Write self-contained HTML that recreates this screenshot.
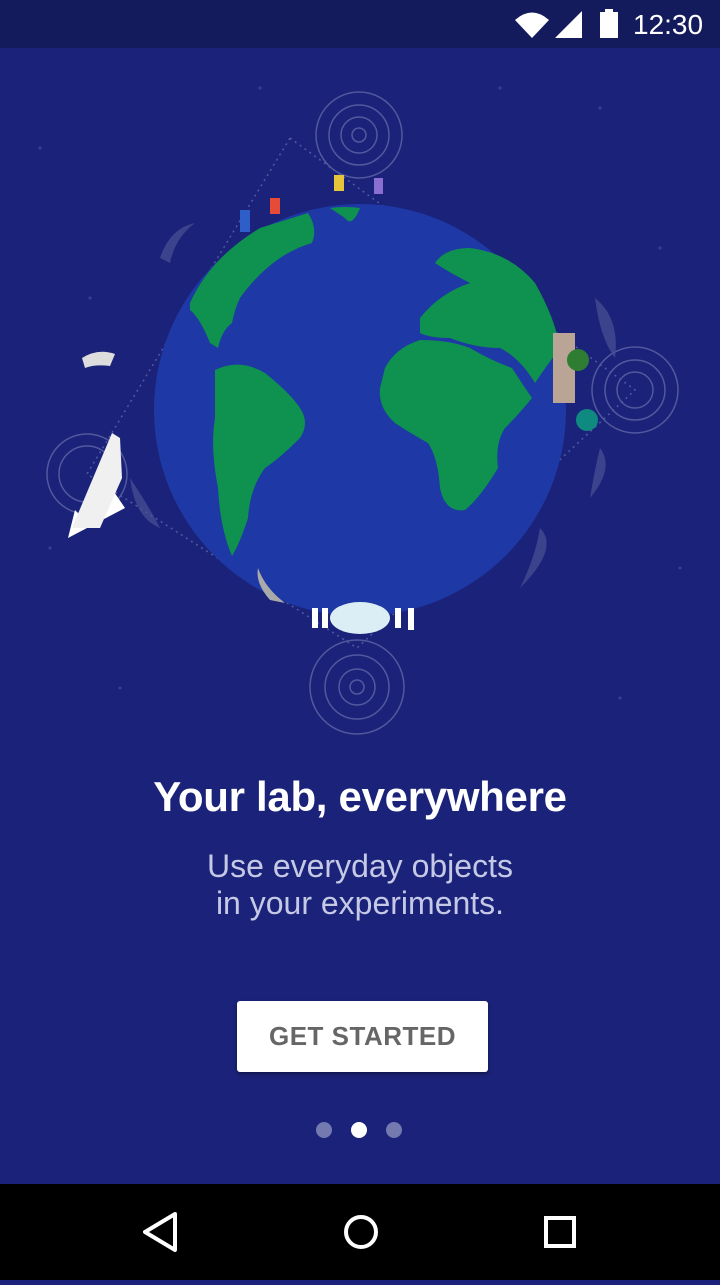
<!DOCTYPE html>
<html><head><style>
body{margin:0;width:720px;height:1280px;background:#1a2379;font-family:"Liberation Sans",Roboto,sans-serif;position:relative;overflow:hidden}
.sb{position:absolute;top:0;left:0;width:720px;height:48px;background:#131b5c;color:#fff}
.nav{position:absolute;bottom:0;left:0;width:720px;height:96px;background:#000}
h1{position:absolute;top:773px;width:720px;text-align:center;margin:0;color:#fff;font-size:42px;font-weight:bold;letter-spacing:-0.3px}
p{position:absolute;top:848px;width:720px;text-align:center;margin:0;color:#c6c9e6;font-size:32px;line-height:37px}
.btn{position:absolute;left:237px;top:1001px;width:251px;height:71px;background:#fff;border-radius:3px;box-shadow:0 2px 4px rgba(0,0,0,.4);color:#666;font-size:26px;font-weight:bold;text-align:center;line-height:71px;letter-spacing:.5px}
.dot{position:absolute;top:1122px;width:16px;height:16px;border-radius:50%;background:#7479b0}
</style></head><body>
<div class="sb">
<svg width="720" height="48" style="position:absolute;top:0;left:0">
<path d="M515 20 Q532 5 549 20 L532 38 Z" fill="#fff"/>
<path d="M555 38 L582 11 L582 38 Z" fill="#fff"/>
<rect x="600" y="12" width="18" height="26" fill="#fff"/><rect x="605" y="9" width="8" height="4" fill="#fff"/>
<text x="633" y="34" fill="#fff" font-size="28" font-family="Liberation Sans">12:30</text>
</svg></div>
<svg width="720" height="760" style="position:absolute;top:48px;left:0">
<g fill="#3a4290">
<circle cx="40" cy="100" r="1.5"/><circle cx="260" cy="40" r="1.5"/><circle cx="600" cy="60" r="1.5"/><circle cx="660" cy="200" r="1.5"/><circle cx="90" cy="250" r="1.5"/><circle cx="50" cy="500" r="1.5"/><circle cx="680" cy="520" r="1.5"/><circle cx="120" cy="640" r="1.5"/><circle cx="620" cy="650" r="1.5"/><circle cx="500" cy="40" r="1.5"/>
</g>
<g fill="none" stroke="#5f67a8" stroke-width="1.5" opacity=".8">
<circle cx="359" cy="87" r="43"/><circle cx="359" cy="87" r="30"/><circle cx="359" cy="87" r="18"/><circle cx="359" cy="87" r="7"/>
<circle cx="357" cy="639" r="47"/><circle cx="357" cy="639" r="32"/><circle cx="357" cy="639" r="18"/><circle cx="357" cy="639" r="7"/>
<circle cx="635" cy="342" r="43"/><circle cx="635" cy="342" r="30"/><circle cx="635" cy="342" r="18"/>
<circle cx="87" cy="426" r="40"/><circle cx="87" cy="426" r="28"/>
<path d="M290 90 L635 342 L357 600 L87 426 Z" stroke-dasharray="2 4"/>
</g>
<g fill="#4a5196" opacity=".7">
<path d="M160 210 Q170 180 195 175 Q175 190 170 215 Z"/>
<path d="M595 250 Q620 270 615 310 Q600 290 595 250 Z"/>
<path d="M600 400 Q615 420 590 450 Q595 420 600 400 Z"/>
<path d="M540 480 Q560 500 520 540 Q535 510 540 480 Z"/>
<path d="M130 430 Q150 460 160 480 Q135 470 130 430 Z"/>
</g>
<circle cx="360" cy="362" r="206" fill="#1e38a5"/>
<g fill="#0f914f">
<path d="M190 255 Q210 210 260 180 L308 165 Q318 180 312 195 Q295 200 280 210 Q258 225 240 250 Q235 260 232 275 Q222 282 218 300 L210 295 Q200 270 190 262 Z"/>
<path d="M215 322 Q240 310 265 325 Q290 345 300 360 Q310 375 300 390 Q280 410 265 420 Q250 440 248 470 Q240 495 232 508 Q220 480 218 440 Q210 400 215 370 Z"/>
<path d="M385 320 Q395 300 420 292 Q450 292 470 300 Q490 312 512 320 Q525 340 532 350 Q520 365 505 380 Q495 395 498 420 Q480 450 465 462 Q445 465 440 440 Q438 410 428 395 Q410 385 395 375 Q378 360 380 340 Z"/>
<path d="M420 270 Q440 245 470 235 Q450 225 435 215 Q445 200 470 200 Q510 205 535 235 Q555 270 560 300 Q545 320 535 335 Q520 310 500 300 Q475 300 450 290 Q430 290 420 285 Z"/>
<path d="M330 160 Q345 158 360 160 Q352 180 345 170 Z"/>
</g>
<path d="M125 460 L110 438 L90 478 L75 462 L68 490 Z" fill="#fff"/>
<path d="M72 480 L112 385 L120 390 L122 430 L100 480 Z" fill="#f0f0f0"/>
<path d="M82 310 Q98 300 115 306 L110 318 Q95 316 85 320 Z" fill="#ddd"/>
<circle cx="587" cy="372" r="11" fill="#0e8a80"/>
<rect x="553" y="285" width="22" height="70" fill="#b9a496"/>
<circle cx="578" cy="312" r="11" fill="#2e7d32"/>
<ellipse cx="360" cy="570" rx="30" ry="16" fill="#dceef5"/>
<g fill="#fff"><rect x="312" y="560" width="6" height="20"/><rect x="322" y="560" width="6" height="20"/><rect x="395" y="560" width="6" height="20"/><rect x="408" y="560" width="6" height="22"/></g>
<path d="M258 520 Q265 540 285 555 L270 552 Q255 535 258 520 Z" fill="#aaa"/>
<g fill="#e6c53a"><rect x="334" y="127" width="10" height="16"/></g>
<g fill="#e54b37"><rect x="270" y="150" width="10" height="16"/></g>
<g fill="#2e5fc9"><rect x="240" y="162" width="10" height="22"/></g>
<g fill="#8a6fd1"><rect x="374" y="130" width="9" height="16"/></g>
</svg>
<h1>Your lab, everywhere</h1>
<p>Use everyday objects<br>in your experiments.</p>
<div class="btn">GET STARTED</div>
<div class="dot" style="left:316px"></div>
<div class="dot" style="left:351px;background:#fff"></div>
<div class="dot" style="left:386px"></div>
<div class="nav">
<svg width="720" height="96">
<path d="M175 30 L145 48 L175 66 Z" fill="none" stroke="#fff" stroke-width="4" stroke-linejoin="round"/>
<circle cx="361" cy="48" r="15" fill="none" stroke="#fff" stroke-width="4"/>
<rect x="546" y="34" width="28" height="28" fill="none" stroke="#fff" stroke-width="4"/>
</svg></div>
</body></html>
